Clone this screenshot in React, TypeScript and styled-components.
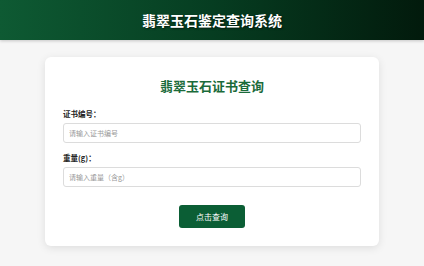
import React from "react";
import styled, { createGlobalStyle } from "styled-components";

const GlobalStyle = createGlobalStyle`
  html, body {
    margin: 0;
    padding: 0;
    background: #f6f6f6;
    font-family: "Noto Sans CJK SC", "Noto Sans", sans-serif;
  }
  * { box-sizing: border-box; }
`;

const Header = styled.header`
  height: 40px;
  display: flex;
  align-items: center;
  justify-content: center;
  background: linear-gradient(90deg, #0e5a33 0%, #063d21 50%, #021a0c 100%);
  box-shadow: 0 1px 3px rgba(0, 0, 0, 0.2);
`;

const HeaderTitle = styled.h1`
  margin: 0;
  font-size: 14px;
  line-height: 18px;
  font-weight: 700;
  color: #ffffff;
  text-shadow: 1px 1px 2px rgba(0, 0, 0, 0.6);
`;

const Main = styled.main`
  padding: 17px 45px 20px;
`;

const Card = styled.section`
  background: #ffffff;
  border-radius: 6px;
  box-shadow: 0 2px 8px rgba(0, 0, 0, 0.1);
  padding: 20px 18px 18px;
  display: flex;
  flex-direction: column;
`;

const CardTitle = styled.h2`
  margin: 0 0 14px;
  text-align: center;
  font-size: 13px;
  line-height: 18px;
  font-weight: 700;
  color: #1b6b3a;
`;

const Field = styled.div<{ $last?: boolean }>`
  display: flex;
  flex-direction: column;
  gap: 4px;
  margin-bottom: ${(p) => (p.$last ? "18px" : "10px")};
`;

const Label = styled.label`
  font-size: 7.5px;
  line-height: 10px;
  font-weight: 700;
  color: #222;
`;

const Input = styled.input`
  height: 20px;
  width: 100%;
  border: 1px solid #dcdcdc;
  border-radius: 3px;
  padding: 0 5px;
  font-size: 7px;
  font-family: inherit;
  color: #333;
  background: #fff;
  outline: none;
  &::placeholder {
    color: #9a9a9a;
  }
`;

const Button = styled.button`
  align-self: center;
  width: 66px;
  height: 23px;
  border: none;
  border-radius: 3px;
  background: #0b5e35;
  color: #fff;
  font-size: 8px;
  font-family: inherit;
  cursor: pointer;
  padding: 0;
`;

export default function App() {
  return (
    <>
      <GlobalStyle />
      <Header>
        <HeaderTitle>翡翠玉石鉴定查询系统</HeaderTitle>
      </Header>
      <Main>
        <Card>
          <CardTitle>翡翠玉石证书查询</CardTitle>
          <Field>
            <Label htmlFor="cert">证书编号：</Label>
            <Input id="cert" placeholder="请输入证书编号" />
          </Field>
          <Field $last>
            <Label htmlFor="weight">重量(g)：</Label>
            <Input id="weight" placeholder="请输入重量（含g）" />
          </Field>
          <Button>点击查询</Button>
        </Card>
      </Main>
    </>
  );
}
